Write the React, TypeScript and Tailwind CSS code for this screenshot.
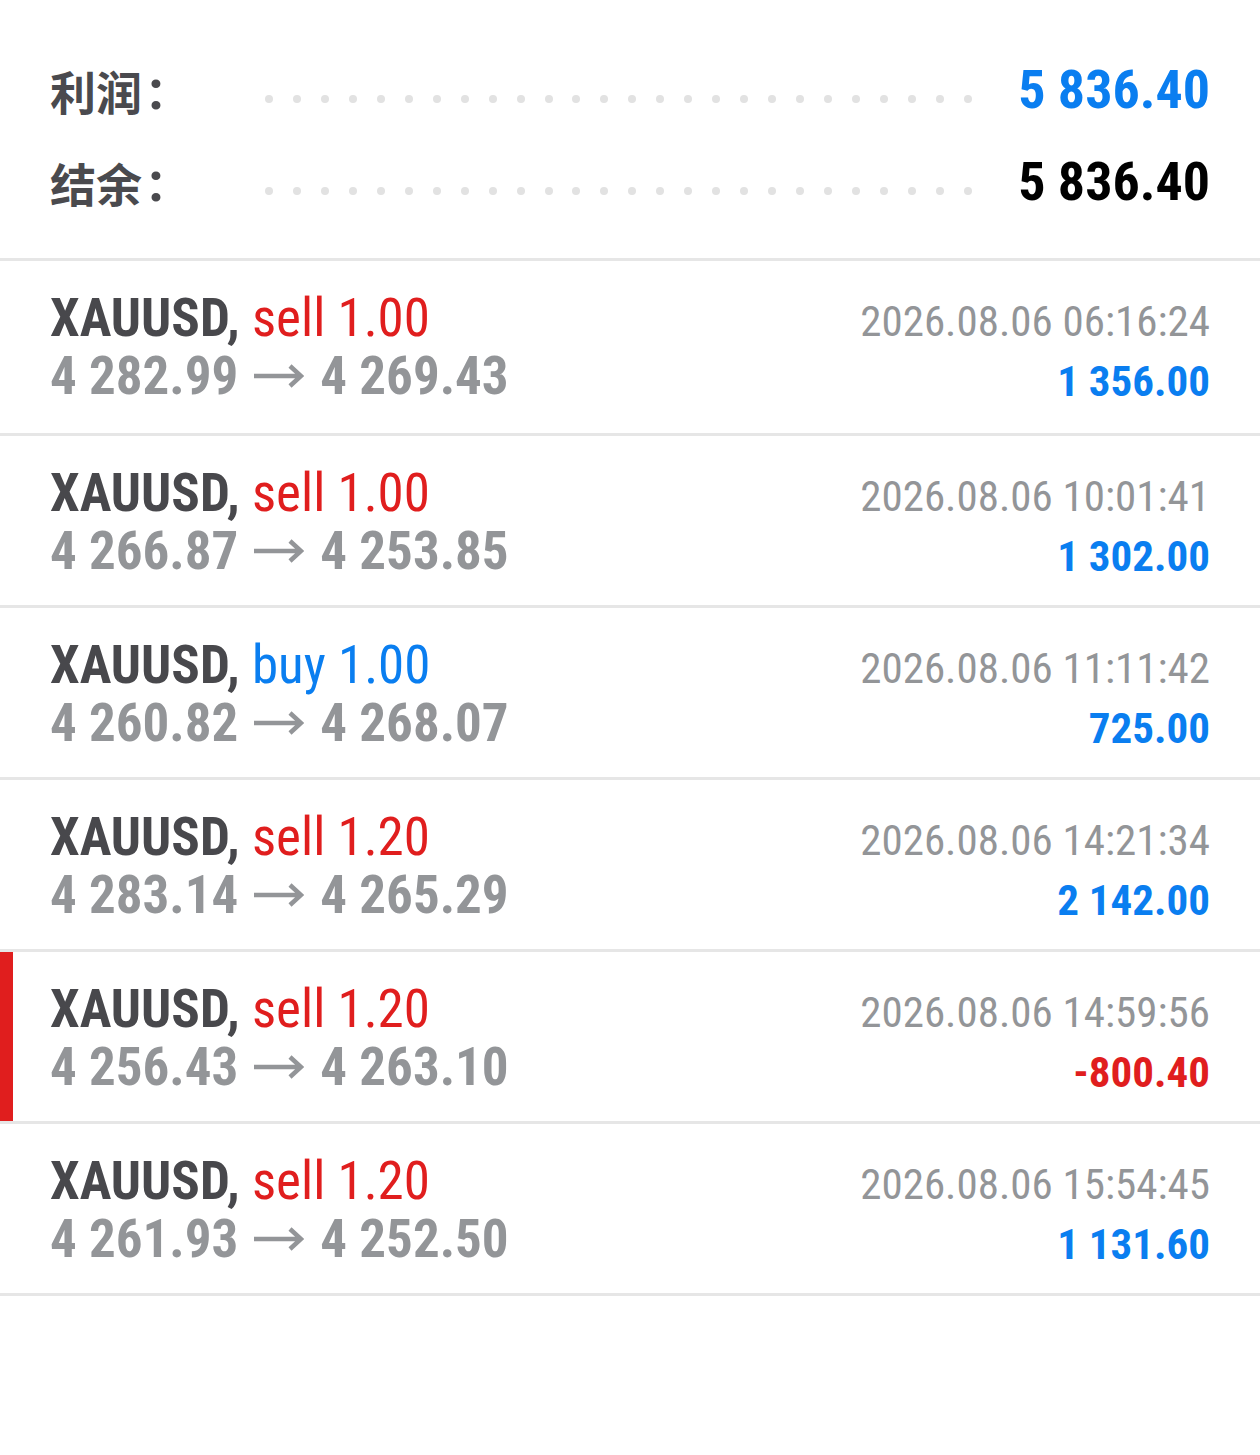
import React from 'react';

type Deal = {
  side: 'sell' | 'buy';
  volume: string;
  open: string;
  close: string;
  time: string;
  profit: string;
  marked?: boolean;
};

const DEALS: Deal[] = [
  { side: 'sell', volume: '1.00', open: '4 282.99', close: '4 269.43', time: '2026.08.06 06:16:24', profit: '1 356.00' },
  { side: 'sell', volume: '1.00', open: '4 266.87', close: '4 253.85', time: '2026.08.06 10:01:41', profit: '1 302.00' },
  { side: 'buy', volume: '1.00', open: '4 260.82', close: '4 268.07', time: '2026.08.06 11:11:42', profit: '725.00' },
  { side: 'sell', volume: '1.20', open: '4 283.14', close: '4 265.29', time: '2026.08.06 14:21:34', profit: '2 142.00' },
  { side: 'sell', volume: '1.20', open: '4 256.43', close: '4 263.10', time: '2026.08.06 14:59:56', profit: '-800.40', marked: true },
  { side: 'sell', volume: '1.20', open: '4 261.93', close: '4 252.50', time: '2026.08.06 15:54:45', profit: '1 131.60' },
];

const Arrow = () => (
  <svg width="50" height="24" viewBox="0 0 50 24" className="mx-[16px] inline-block" fill="none">
    <path d="M0 12H47M36 2L47 12L36 22" stroke="#939598" strokeWidth="4.5" />
  </svg>
);

const Dots = () => (
  <div className="mt-[18px] flex flex-1 items-center justify-between">
    {Array.from({ length: 26 }).map((_, i) => (
      <span key={i} className="block h-[8px] w-[8px] rounded-full bg-[#e2e2e2]" />
    ))}
  </div>
);

const SummaryRow = ({ label, value, valueClass }: { label: string; value: string; valueClass: string }) => (
  <div className="flex h-[92px] items-center">
    <div className="flex w-[215px] items-center text-[#4a4a4e]">
      <span className="font-['Noto_Sans_CJK_SC',sans-serif] text-[46px] font-bold leading-none">{label}</span>
      <span className="ml-[6px] text-[56px] font-bold leading-none">:</span>
    </div>
    <Dots />
    <div className={`pl-[46px] text-[54px] font-bold leading-none ${valueClass}`}>{value}</div>
  </div>
);

const DealRow = ({ deal, first }: { deal: Deal; first: boolean }) => (
  <div
    className={`relative flex items-start justify-between border-b-[3px] border-[#e6e6e6] px-[50px] pt-[28px] ${
      first ? 'h-[175px]' : 'h-[172px]'
    }`}
  >
    {deal.marked && <div className="absolute left-0 top-0 h-full w-[13px] bg-[#e01e1e]" />}
    <div className="flex flex-col leading-[58px]">
      <div className="text-[53px] text-[#48484c]">
        <span className="font-bold">XAUUSD, </span>
        <span className={deal.side === 'sell' ? 'text-[#e01e1e]' : 'text-[#0a7ef0]'}>
          {deal.side} {deal.volume}
        </span>
      </div>
      <div className="flex items-center text-[53px] font-bold text-[#939598]">
        <span>{deal.open}</span>
        <Arrow />
        <span>{deal.close}</span>
      </div>
    </div>
    <div className="flex flex-col items-end pt-[2px] leading-[60px]">
      <div className="text-[43px] text-[#939598]">{deal.time}</div>
      <div className={`text-[43px] font-bold ${deal.profit.startsWith('-') ? 'text-[#e01e1e]' : 'text-[#0a7ef0]'}`}>
        {deal.profit}
      </div>
    </div>
  </div>
);

const App: React.FC = () => {
  return (
    <div className="min-h-screen bg-white font-['Roboto',sans-serif] font-stretch-condensed">
      <div className="px-[50px] pt-[44px] pb-[30px]">
        <SummaryRow label="利润" value="5 836.40" valueClass="text-[#0a7ef0]" />
        <SummaryRow label="结余" value="5 836.40" valueClass="text-black" />
      </div>
      <div className="border-t-[3px] border-[#e6e6e6]">
        {DEALS.map((d, i) => (
          <DealRow key={i} deal={d} first={i === 0} />
        ))}
      </div>
    </div>
  );
};

export default App;
